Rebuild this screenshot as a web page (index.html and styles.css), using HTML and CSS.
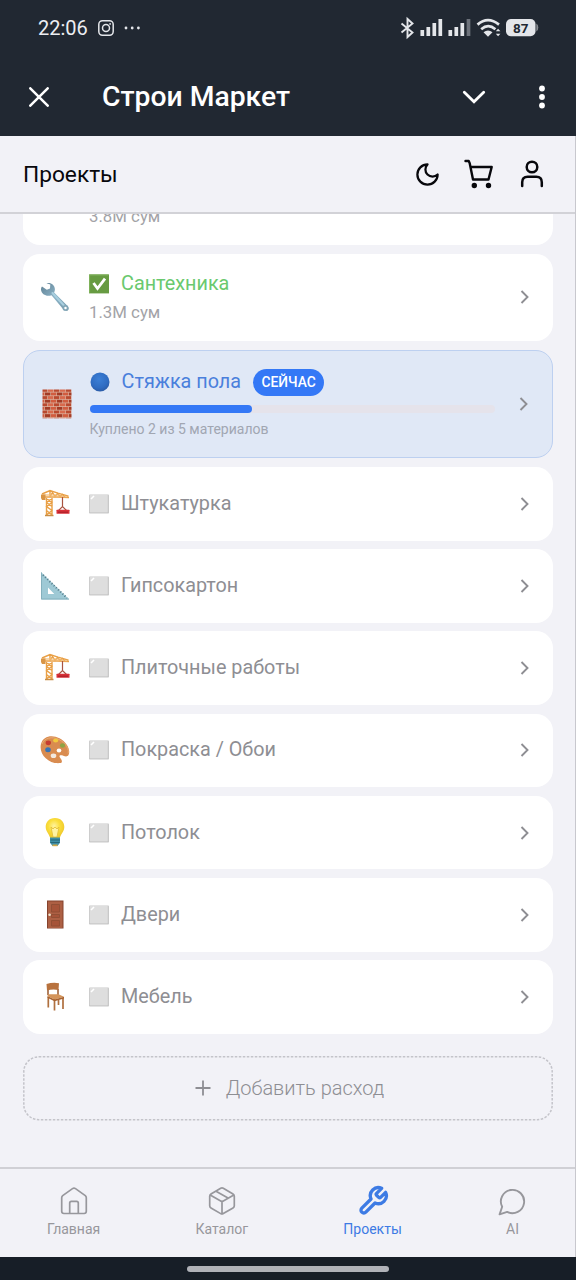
FILE: index.html
```html
<!DOCTYPE html>
<html lang="ru">
<head>
<meta charset="utf-8">
<meta name="viewport" content="width=device-width, initial-scale=1">
<title>Строи Маркет</title>
<link rel="stylesheet" href="styles.css">
</head>
<body>
<svg class="defs" aria-hidden="true">
  <defs>
    <linearGradient id="g-steel" x1="0" y1="0" x2="1" y2="1"><stop offset="0" stop-color="#5f8093"/><stop offset=".5" stop-color="#8db4c8"/><stop offset="1" stop-color="#7396a8"/></linearGradient>
    <radialGradient id="g-bulb" cx=".45" cy=".4" r=".6"><stop offset="0" stop-color="#fff3a0"/><stop offset=".5" stop-color="#fbdf3c"/><stop offset="1" stop-color="#eec72a"/></radialGradient>
    <radialGradient id="g-blue" cx=".45" cy=".35" r=".65"><stop offset="0" stop-color="#3c7fd6"/><stop offset=".7" stop-color="#2f6cc2"/><stop offset="1" stop-color="#2b5ca8"/></radialGradient>
    <pattern id="p-brick" width="12" height="7.2" patternUnits="userSpaceOnUse">
      <rect width="12" height="7.2" fill="#dcb8a6"/>
      <rect x="0" y="0" width="5.3" height="2.9" fill="#b9492f"/><rect x="6" y="0" width="5.4" height="2.9" fill="#d8694c"/>
      <rect x="-3" y="3.6" width="5.4" height="2.9" fill="#d15c3f"/><rect x="3" y="3.6" width="5.4" height="2.9" fill="#a33b25"/><rect x="9" y="3.6" width="5.4" height="2.9" fill="#d15c3f"/>
    </pattern>
    <symbol id="e-wrench" viewBox="0 0 30 30">
      <path d="M2 4.500 6.800 7.800 10 6.500 10.300 2.500 6.500 1.200C10.500 0 15 2.600 14.900 7.500c0 1.100-.3 2.200-.8 3L27.600 24c3 3.400-.9 6.500-4 3.700L11.500 13.200C7 15 1.500 12.700 1 7.800c-.1-1.500.2-2.400 1-3.300z" fill="url(#g-steel)"/>
      <path d="m12.500 11 11.500 12.500" stroke="#a9cfdf" stroke-width="2" stroke-linecap="round"/>
      <circle cx="25.500" cy="25.900" r="2.900" fill="#82a6b7"/><circle cx="25.500" cy="25.900" r="1.250" fill="#fff"/>
    </symbol>
    <symbol id="e-brick" viewBox="0 0 30 30"><rect x=".5" y=".5" width="29" height="28.800" fill="url(#p-brick)"/></symbol>
    <symbol id="e-crane" viewBox="0 0 30 30">
      <g fill="none" stroke="#e9a046" stroke-width="1.400">
        <path d="M6.500 9v17.500M12 9v17.500M6.500 26 12 21.500 6.500 17.500 12 13.500 6.500 9.500M6.500 21.500 12 26M6.500 13.500l5.500 4M12 9.500l-5.500 4"/>
        <path d="M2 5 10 1.500l8 2.700 10.500 3M10 1.500v6M2 8h15l12 .5"/>
        <path d="m10 8 2.500-4.500L15 7.500l2.500-3 2.500 3 2.500-2 2.500 2.500"/>
      </g>
      <path d="M3 5h16l9 3.500H3z" fill="#f3bd77" opacity=".6"/>
      <path d="M1 5.500h4.500V11H2L1 9z" fill="#d99545"/>
      <path d="M5 26.500h8.500" stroke="#c88d45" stroke-width="1.500"/>
      <path d="M22.500 8v9.500M18.500 21.500l4-4 4 4" stroke="#a95340" fill="none" stroke-width="1.200"/>
      <rect x="16.500" y="20.800" width="13" height="4" rx=".5" fill="#d93038"/><path d="M18 23.200h10" stroke="#a51e29"/>
    </symbol>
    <symbol id="e-ruler" viewBox="0 0 30 30">
      <path fill-rule="evenodd" d="M1 1v27.500h28.300zM8 16.500l6.300 6.500H8z" fill="#9ec9d5"/>
      <path d="M1.500 1.500v26.500H29" fill="none" stroke="#84b0bd"/>
      <path d="m3 4 24 23" stroke="#557b88" stroke-width="2" stroke-dasharray="1 2"/>
    </symbol>
    <symbol id="e-palette" viewBox="0 0 30 30">
      <path d="M1 9C3 1 12-.7 19.500 3.200 27 7 31 15.500 28.500 20c-1.500 2.600-4.500 1-6.700.3-2.500-.7-3 1-1.500 2.800 2 2.500 2.500 4.800-.7 5C8 29-1.500 18.500 1 9z" fill="#d98c50"/>
      <path d="M2 9C4 3 12 1 19 4.500 26 8 29.500 15 28 18.500" fill="none" stroke="#e9ab75"/>
      <ellipse cx="8.300" cy="7.800" rx="2.700" ry="2.400" fill="#c63d30"/><ellipse cx="15.700" cy="5.400" rx="2.600" ry="2" fill="#f2c93c"/><ellipse cx="22.500" cy="10.500" rx="2.600" ry="2.200" fill="#8da344"/><ellipse cx="8" cy="14.800" rx="2.800" ry="2.500" fill="#3974b5"/><ellipse cx="13.500" cy="20.800" rx="2.800" ry="2.300" fill="#f2e8df"/><ellipse cx="19" cy="15.500" rx="2.300" ry="1.900" fill="#fff"/>
    </symbol>
    <symbol id="e-bulb" viewBox="0 0 30 30">
      <path d="M15 0c6 0 9.300 4 9.300 9 0 4.500-3.300 6.500-4.500 11h-9.600C9 15.500 5.700 13.500 5.700 9 5.700 4 9 0 15 0z" fill="url(#g-bulb)"/>
      <path d="m11 9 2 2 2-2 2 2 2-2-2 10h-4z" fill="#fff3a3" stroke="#e2bc35" stroke-width=".8"/>
      <path d="M10 19.500h10v5.300L17.500 28h-5L10 24.800z" fill="#3e8ea5"/><path d="M10.500 22H20m-9.500 2.500h9" stroke="#276779" stroke-width="1"/><path d="M12.500 26.500h5v1.700h-5z" fill="#d4aa47"/>
    </symbol>
    <symbol id="e-door" viewBox="0 0 30 30">
      <path d="M7 .5h16.500v28H7z" fill="#85422d"/><path d="M8 1.500h14.500v26.500H8z" fill="#ad6044"/>
      <path d="M11.500 4.500h8v7.500h-8zm0 10h8v3h-8zm0 6h8V26h-8z" fill="#a65439" stroke="#8d4c34" stroke-width=".8"/>
      <circle cx="9.600" cy="14.800" r="1.300" fill="#efe5d0"/>
    </symbol>
    <symbol id="e-chair" viewBox="0 0 30 30">
      <path d="M8 7v6M18 7v6" stroke="#98582e" stroke-width="1.500"/>
      <path d="M8.300 15v10.500M14.500 17v11.500M23 16v11M18.500 18v5" stroke="#b0703f" stroke-width="1.700"/>
      <path d="M6.500 2q6-1.800 12.500-.8l-.5 6.800q-6-1.200-11.500.5z" fill="#b8723e"/>
      <path d="M8 12.300h10.500l5.500 2.500-9.500 2.700L7.500 14z" fill="#d4945a"/><path d="m7.500 14 7 3.500 9.500-2.700v1.700l-9.500 2.700-7-3.500z" fill="#a8622f"/>
    </symbol>
    <symbol id="e-check" viewBox="0 0 20 20"><rect width="20" height="19" y=".4" fill="#679b42"/><path d="M.6 18.900V1h18.700" fill="none" stroke="#80b35c"/><path d="m4.500 9 4 5.500L16 4.600" fill="none" stroke="#fff" stroke-width="2.800"/></symbol>
    <symbol id="e-dot" viewBox="0 0 20 20"><circle cx="10" cy="10" r="9.500" fill="url(#g-blue)"/></symbol>
    <symbol id="e-box" viewBox="0 0 20 20"><rect y=".5" width="20" height="19" rx=".8" fill="#c9c9c9"/><rect x=".8" y="1" width="17.900" height="17.200" rx=".6" fill="#dedede"/><path d="m2 5 3-3" stroke="#fff" stroke-width="1.600"/></symbol>
    <symbol id="i-next" viewBox="0 0 10 16"><path d="m1.500 2 6 6-6 6" fill="none" stroke="currentColor" stroke-width="1.900"/></symbol>
  </defs>
</svg>
<div class="screen">
  <header class="status">
    <span class="clock">22:06</span>
    <svg class="insta" viewBox="0 0 16 16"><g fill="none" stroke="currentColor" stroke-width="1.500"><rect x=".8" y=".8" width="14.400" height="14.400" rx="3.600"/><circle cx="8" cy="8" r="3.500"/></g><circle cx="12.100" cy="3.900" r=".9" fill="currentColor"/></svg>
    <svg class="more" viewBox="0 0 17 4"><g fill="currentColor"><circle cx="2" cy="2" r="1.400"/><circle cx="8.200" cy="2" r="1.400"/><circle cx="14.400" cy="2" r="1.400"/></g></svg>
    <svg class="system" viewBox="0 0 142 24">
      <path d="m1.500 7.500 11 9L7.500 21V3l5 4.500-11 9" fill="none" stroke="#e4e6ea" stroke-width="1.900"/>
      <g stroke="#e4e6ea" stroke-width="3.700"><path d="M22.300 20v-6M28.300 20v-9M34.300 20V7M40.300 20V3M50.300 20v-6M56.300 20v-9M62.300 20V7"/><path d="M68.500 20V3" stroke="#6d727b"/></g>
      <g fill="none" stroke="#e4e6ea" stroke-width="2.700"><path d="M77.500 8.600q10.300-8.800 21.500 0M81.200 13.200q7-6 14.200 0"/></g>
      <path d="M83.500 16.200q4.500-3.500 9 0L88 20.700zM95.800 15.300l2.300-2.600 2.300 2.600zm0 2.400h4.600l-2.300 2.600z" fill="#e4e6ea"/>
      <rect x="106" y="3" width="29.500" height="17.200" rx="5" fill="#e4e6ea"/><path d="M136.300 7.500q2 1 2 4t-2 4z" fill="#878b91"/>
      <text x="120.800" y="16.500" text-anchor="middle" class="charge">87</text>
    </svg>
  </header>
  <div class="titlebar">
    <svg class="close" viewBox="0 0 20 20"><path d="m1.300 1.300 17.400 17.400m0-17.400L1.300 18.700" stroke="currentColor" stroke-width="2.500" stroke-linecap="round"/></svg>
    <h1 class="app-name">Строи Маркет</h1>
    <svg class="down" viewBox="0 0 24 14"><path d="m2.300 2.300 9.700 9.400 9.700-9.400" fill="none" stroke="currentColor" stroke-width="2.800" stroke-linecap="round"/></svg>
    <svg class="dots" viewBox="0 0 6 24"><g fill="currentColor"><circle cx="3" cy="3.500" r="2.900"/><circle cx="3" cy="12" r="2.900"/><circle cx="3" cy="20.500" r="2.900"/></g></svg>
  </div>
  <div class="page">
    <div class="topbar">
      <h2 class="page-name">Проекты</h2>
      <svg class="tool moon" viewBox="0 0 24 24"><path d="M12 3a6 6 0 0 0 9 9 9 9 0 1 1-9-9Z"/></svg>
      <svg class="tool cart" viewBox="0 0 30 30"><path d="M1.500 2h3.200l1 2.200L9 20.500h15.500L27.700 8H6.500"/><circle cx="10.300" cy="26.500" r="1.500" fill="currentColor"/><circle cx="24.500" cy="26.500" r="1.500" fill="currentColor"/></svg>
      <svg class="tool user" viewBox="0 0 24 28"><circle cx="12" cy="7" r="5.300"/><path d="M2.200 26v-3.800q0-5.500 5.500-5.500h8.600q5.500 0 5.500 5.500V26"/></svg>
    </div>
    <main class="content">
      <section class="card card-done card-hidden"><div class="body"><div class="name">&nbsp;</div><div class="sum">3.8M сум</div></div></section>
      <section class="card card-done"><svg class="pic"><use href="#e-wrench"/></svg><div class="body"><div class="name done"><svg class="mark"><use href="#e-check"/></svg>Сантехника</div><div class="sum">1.3M сум</div></div><svg class="next"><use href="#i-next"/></svg></section>
      <section class="card card-active"><svg class="pic"><use href="#e-brick"/></svg><div class="body"><div class="name current"><svg class="mark"><use href="#e-dot"/></svg>Стяжка пола<span class="badge">СЕЙЧАС</span></div><div class="track"><div class="fill" style="width:40%"></div></div><div class="caption">Куплено 2 из 5 материалов</div></div><svg class="next"><use href="#i-next"/></svg></section>
      <section class="card"><svg class="pic"><use href="#e-crane"/></svg><div class="body name"><svg class="mark"><use href="#e-box"/></svg>Штукатурка</div><svg class="next"><use href="#i-next"/></svg></section>
      <section class="card"><svg class="pic"><use href="#e-ruler"/></svg><div class="body name"><svg class="mark"><use href="#e-box"/></svg>Гипсокартон</div><svg class="next"><use href="#i-next"/></svg></section>
      <section class="card"><svg class="pic"><use href="#e-crane"/></svg><div class="body name"><svg class="mark"><use href="#e-box"/></svg>Плиточные работы</div><svg class="next"><use href="#i-next"/></svg></section>
      <section class="card"><svg class="pic"><use href="#e-palette"/></svg><div class="body name"><svg class="mark"><use href="#e-box"/></svg>Покраска / Обои</div><svg class="next"><use href="#i-next"/></svg></section>
      <section class="card"><svg class="pic"><use href="#e-bulb"/></svg><div class="body name"><svg class="mark"><use href="#e-box"/></svg>Потолок</div><svg class="next"><use href="#i-next"/></svg></section>
      <section class="card"><svg class="pic"><use href="#e-door"/></svg><div class="body name"><svg class="mark"><use href="#e-box"/></svg>Двери</div><svg class="next"><use href="#i-next"/></svg></section>
      <section class="card"><svg class="pic"><use href="#e-chair"/></svg><div class="body name"><svg class="mark"><use href="#e-box"/></svg>Мебель</div><svg class="next"><use href="#i-next"/></svg></section>
      <div class="add">
        <svg class="add-frame"><rect x=".8" y=".8" width="528.400" height="62.900" rx="15"/></svg>
        <svg class="plus" viewBox="0 0 16 16"><path d="M8 .5v15M.5 8h15" stroke="currentColor" stroke-width="1.800"/></svg><span>Добавить расход</span>
      </div>
    </main>
    <nav class="tabs">
      <a class="tab tab-home"><svg class="tab-icon" viewBox="0 0 28 28"><path d="M1.700 10.800q0-1.300 1-2.200L12.500 1.600q1.500-1 3 0l9.800 7q1 .9 1 2.200v13.500q0 2.200-2.200 2.200H3.900q-2.200 0-2.200-2.200z"/><path d="M9.700 26V16q0-1.700 1.700-1.700h5.200q1.700 0 1.700 1.700v10"/></svg>Главная</a>
      <a class="tab tab-catalog"><svg class="tab-icon" viewBox="0 0 28 28"><path d="M12.700 1.300q1.300-.8 2.600 0l9.700 5.700q1.300.8 1.300 2.200v9.500q0 1.500-1.300 2.200l-9.700 5.700q-1.300.8-2.600 0L3 20.900q-1.300-.7-1.300-2.200V9.200q0-1.400 1.300-2.200zM2.200 8 14 14.700 25.800 8M14 14.700v12M8 4.200l12 6.900"/></svg>Каталог</a>
      <a class="tab tab-projects"><svg class="tab-icon" viewBox="0 0 24 24"><path d="M14.700 6.300a1 1 0 0 0 0 1.400l1.600 1.600a1 1 0 0 0 1.400 0l3.770-3.770a6 6 0 0 1-7.940 7.940l-6.910 6.910a2.120 2.120 0 0 1-3-3l6.910-6.910a6 6 0 0 1 7.940-7.940l-3.760 3.760z"/></svg>Проекты</a>
      <a class="tab tab-ai"><svg class="tab-icon" viewBox="0 0 24 24"><path d="M7.900 20A9 9 0 1 0 4 16.100L2 22Z"/></svg>AI</a>
    </nav>
  </div>
  <footer class="gesture"><div class="handle"></div></footer>
</div>
</body>
</html>
```
FILE: styles.css
```css
* { box-sizing: border-box; }
body { margin: 0; font-family: Roboto, "Noto Sans", sans-serif; color: #8e8e93; background: #f2f2f7; }
svg { display: block; flex: none; }
.defs { position: absolute; width: 0; height: 0; }
.screen { width: 576px; height: 1280px; display: flex; flex-direction: column; overflow: hidden; }

.status { height: 56px; flex: none; display: flex; align-items: center; padding: 0 34px 0 38px; background: #212832; color: #e4e6ea; }
.clock { font-size: 20px; line-height: 24px; width: 60px; color: #eceef2; }
.insta { width: 16px; height: 16px; }
.more { width: 17px; height: 4px; margin-left: 10px; }
.system { width: 142px; height: 24px; margin-left: auto; }
.charge { font: 700 13.500px Roboto, sans-serif; fill: #212832; }

.titlebar { height: 80px; flex: none; display: flex; align-items: center; padding: 1px 31px 0 29px; background: #212832; color: #fff; }
.close { width: 20px; height: 20px; }
.app-name { margin: 0 auto 0 53px; font-size: 28.300px; line-height: 36px; font-weight: 500; }
.down { width: 24px; height: 14px; margin-right: 53px; }
.dots { width: 6px; height: 24px; }

.page { height: 1121px; flex: none; display: flex; flex-direction: column; border-right: 1px solid #c8c8ce; }
.topbar { height: 78px; flex: none; display: flex; align-items: center; padding: 0 31px 0 23px; border-bottom: 2px solid #d2d2d7; background: #f2f2f7; color: #08080c; }
.page-name { margin: 1px auto 0 0; font-size: 22.700px; line-height: 28px; font-weight: 400; }
.tool { fill: none; stroke: currentColor; stroke-linecap: round; stroke-linejoin: round; }
.moon { width: 27px; height: 27px; stroke-width: 2; margin-right: 23px; }
.cart { width: 30px; height: 30px; stroke-width: 2.400; margin-right: 26px; }
.user { width: 24px; height: 28px; stroke-width: 2.500; }

.content { height: 953px; flex: none; overflow: hidden; padding: 0 22px 0 23px; display: flex; flex-direction: column; gap: 8.600px; }
.card { height: 73.600px; flex: none; display: flex; align-items: center; padding: 0 23px 0 17px; border-radius: 17px; background: #fff; }
.card-done { height: 87.600px; padding-top: 2px; }
.card-hidden { margin-top: -56.700px; padding-left: 66px; }
.card-active { height: 108.800px; padding: 0 23px 2px 17.500px; border: 1.500px solid #bdd0f0; background: #e0e8f6; }
.pic { width: 30px; height: 30px; margin-right: 19px; }
.card-active .pic { margin: 1px 18px 0 0; }
.card-active .next { margin-top: 2px; }
.card-done .pic, .card-done .next { margin-top: -2px; }
.body { flex: 1; }
.name { display: flex; align-items: center; font-size: 19.800px; line-height: 28px; }
.mark { width: 20px; height: 20px; margin-right: 12px; }
.done { color: #6ac96e; }
.current { color: #4a7fdc; }
.sum { font-size: 16.800px; line-height: 29px; color: #a3a3a7; }
.badge { height: 27px; margin-left: 12px; padding: 0 8.500px; border-radius: 14px; background: #3478f6; color: #fff; font-size: 13.800px; line-height: 27px; font-weight: 500; }
.track { height: 8px; margin: 9px 24px 7px 0; border-radius: 4px; background: #e5e3eb; }
.fill { height: 8px; border-radius: 4px; background: #3478f6; }
.caption { font-size: 14px; line-height: 18px; color: #a1a6b2; }
.next { width: 10px; height: 16px; }

.add { position: relative; height: 64.500px; flex: none; margin-top: 14px; padding: 0 0 1px 3px; display: flex; align-items: center; justify-content: center; gap: 15px; font-size: 20px; font-weight: 300; }
.add-frame { position: absolute; inset: 0; width: 530px; height: 64.500px; fill: none; stroke: #c4c4ca; stroke-width: 1.500; stroke-dasharray: 2.500 1.500; }
.plus { width: 16px; height: 16px; }

.tabs { height: 90px; flex: none; display: flex; justify-content: space-between; padding: 18px 47px 0 47px; border-top: 2px solid #d0d0d5; background: #f2f2f7; }
.tab { display: flex; flex-direction: column; align-items: center; gap: 4px; font-size: 14px; line-height: 18px; color: #97979c; }
.tab-icon { width: 28px; height: 28px; margin-bottom: 1px; fill: none; stroke: currentColor; stroke-width: 1.700; stroke-linecap: round; stroke-linejoin: round; }
.tab-projects { color: #3d7be4; }
.tab-projects .tab-icon { width: 32px; height: 32px; margin: -2px 0 -1px; stroke-width: 2.500; }
.tab-ai .tab-icon { width: 31px; height: 31px; margin: -1px 0; stroke-width: 1.450; }

.gesture { height: 23px; flex: none; display: flex; justify-content: center; padding-top: 9px; background: #171e27; }
.handle { width: 202px; height: 6px; border-radius: 3px; background: #b0b2b8; }
```
